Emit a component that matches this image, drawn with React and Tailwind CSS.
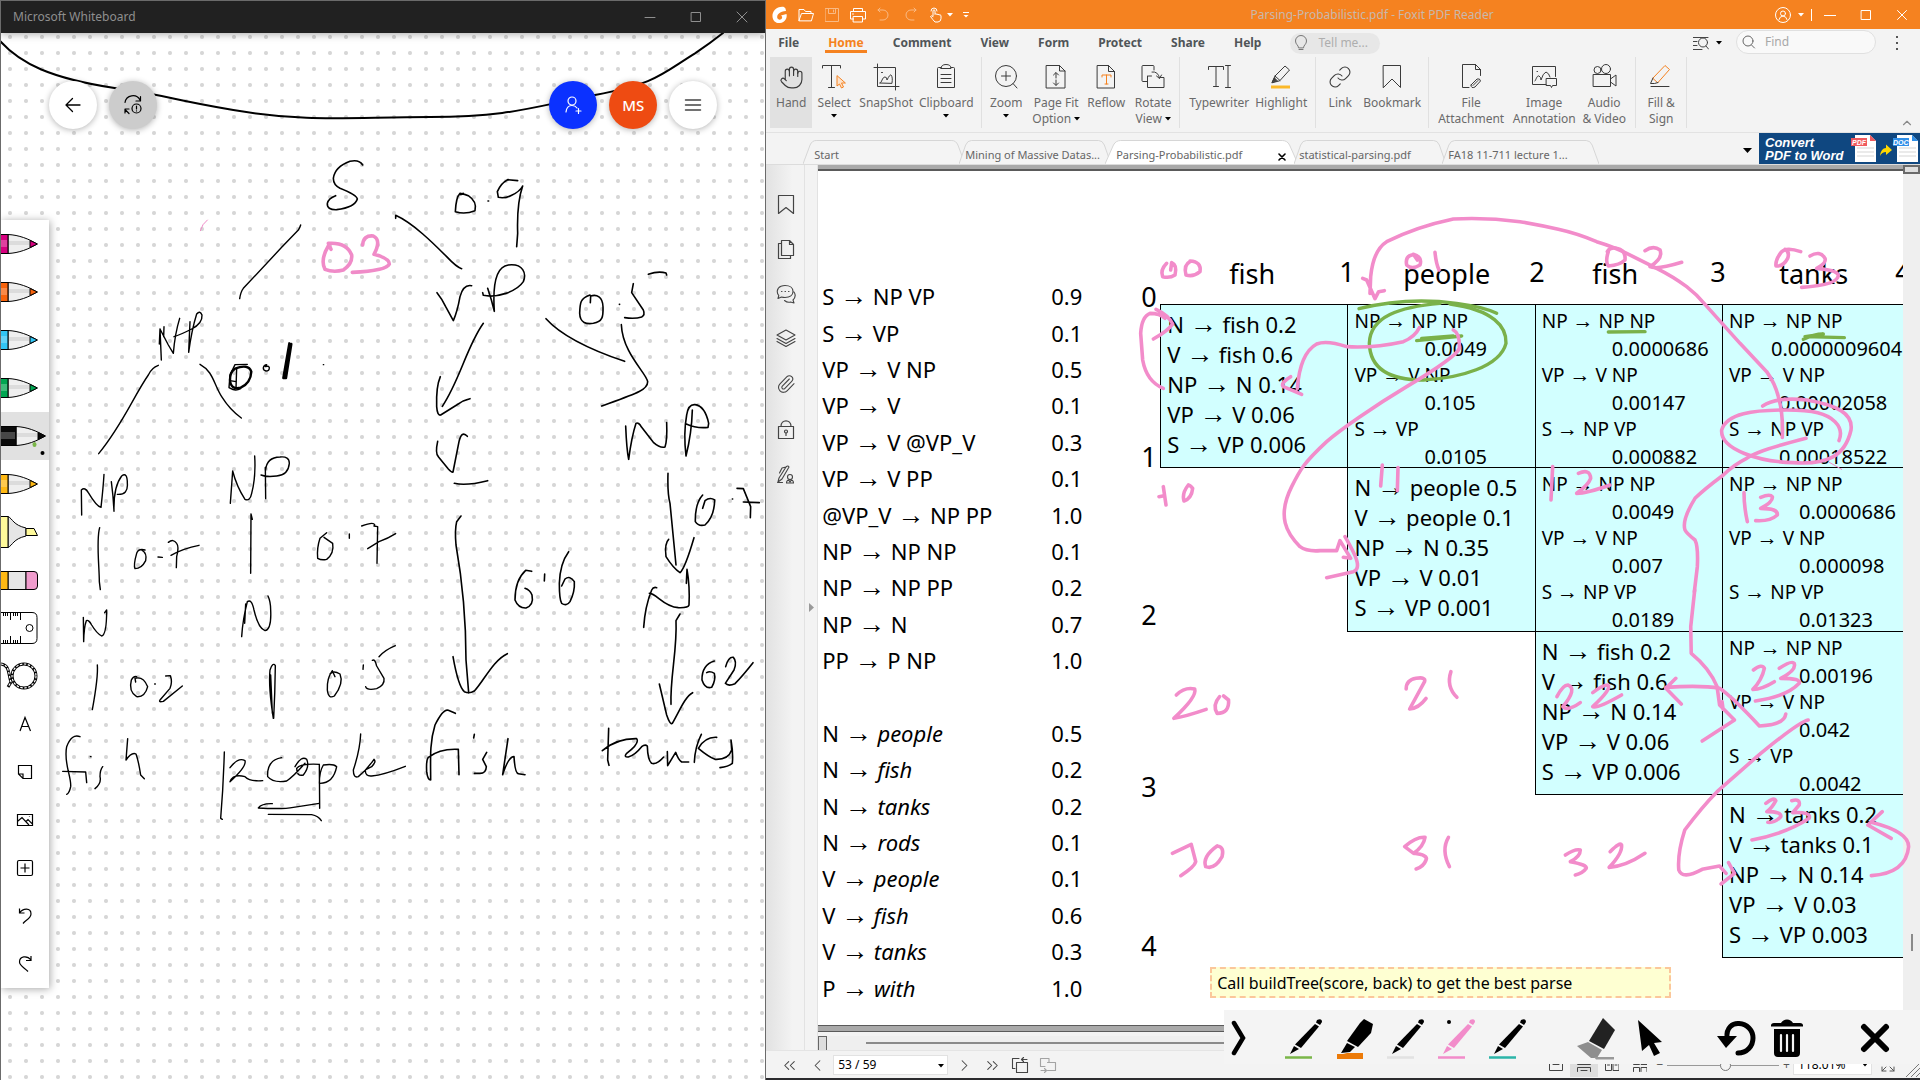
import React from "react";
import { Hand, Paperclip, Link, ChevronsLeft, ChevronLeft, ChevronRight, ChevronsRight, ChevronUp } from "lucide-react";

const UI = "font-['Noto_Sans',sans-serif]";

/* ---------- small helpers ---------- */

function Icon({ size = 24, box = 24, sw = 1, className = "", children }) {
  return (
    <svg width={size} height={size} viewBox={`0 0 ${box} ${box}`} fill="none" stroke="currentColor" strokeWidth={sw} strokeLinecap="round" strokeLinejoin="round" className={`shrink-0 ${className}`} aria-hidden="true">
      {children}
    </svg>
  );
}

function Caret({ className = "" }) {
  return (
    <svg width="6" height="4" viewBox="0 0 6 4" className={`inline-block shrink-0 ${className}`} aria-hidden="true">
      <path d="M0 0h6L3 3.5z" fill="currentColor" />
    </svg>
  );
}

function Ink({ x, y, sx = 1 / 3, color = "#000", w = 2, d }) {
  return (
    <g transform={`translate(${x} ${y}) scale(${sx} ${1 / 3})`} fill="none" stroke={color} strokeLinecap="round" strokeLinejoin="round">
      {d.map((p, i) => (
        <path key={i} d={p} strokeWidth={w} vectorEffect="non-scaling-stroke" />
      ))}
    </g>
  );
}

/* ---------- whiteboard ---------- */

const BOARD_CURVE = [
  "M0 123C60 190 150 235 348 265S480 292 700 330S1050 351 1290 351S1600 320 1785 285S1980 225 2085 160Q2130 130 2169 99",
];

const BOARD_A = [
  "M240 160Q228 172 226 215Q255 224 285 212Q292 185 265 167Q255 162 240 160M250 160l-8 4",
  "M324 183l2 0",
  "M413 122L383 119Q362 130 352 155L355 172Q375 176 395 166Q420 154 428 138Q410 190 413 280L410 320",
  "M47 235L47 226C100 250 160 310 200 350Q230 382 245 386",
  "M171 458Q185 475 197 500L220 542Q232 515 240 470Q250 432 275 437",
  "M323 445Q335 480 343 514C338 440 345 380 385 375C430 370 440 400 430 425C410 455 350 475 310 466L308 458",
  "M630 465C600 475 600 490 599 520C600 550 620 553 640 550C668 545 670 530 669 500C668 470 650 462 632 468L631 488",
  "M718 493l1 0",
  "M760 431L755 458L790 510Q796 525 785 531Q765 537 734 533M805 403Q835 392 858 399L860 405",
  "M498 536Q560 605 734 664",
  "M724 554C728 640 800 700 803 725C803 750 770 760 665 798",
  "M310 550C260 620 240 720 187 799",
  "M181 710Q168 740 170 800Q172 828 182 825L230 795Q250 780 270 776",
  "M173 904Q165 940 175 950L205 987Q215 998 219 996L237 905Q245 870 262 889",
  "M223 1030Q260 1038 323 1022",
  "M737 858Q740 930 746 958Q755 890 768 850Q775 845 785 862L820 907Q840 925 855 921Q862 900 860 848",
  "M937 810Q935 880 918 948Q910 880 920 825Q925 792 945 794Q975 798 986 850L984 862Q950 866 917 851",
  "M864 1000Q862 1060 870 1090L888 1275",
  "M968 1065Q945 1090 946 1145Q955 1160 975 1155Q1003 1130 1004 1080Q990 1070 975 1082L968 1105",
  "M1057 1077l1 0M1071 1045L1090 1046L1112 1100L1111 1133M1090 1086L1138 1088",
];

const BOARD_B = [
  "M243 48L230 65Q224 90 228 135C250 260 258 380 258 480L266 578",
  "M219 470Q235 560 253 575Q268 582 283 573C310 545 340 480 382 461",
  "M455 214L437 211Q405 240 405 300Q415 325 438 324Q462 315 456 285Q450 270 435 265M494 222L493 243",
  "M566 155Q540 190 538 250Q538 300 545 310Q560 320 570 305Q585 275 583 245Q570 225 555 237L545 258",
  "M866 118Q853 130 858 170Q880 205 900 218Q915 205 942 113",
  "M791 382Q795 320 815 270Q820 260 830 263M808 280C830 280 850 320 895 323Q925 324 927 315Q930 260 921 208L919 250",
  "M900 342L888 362C892 450 870 530 873 613M838 552L860 645Q870 675 877 670C900 630 915 590 938 578",
  "M1003 483Q965 495 966 540Q975 568 995 562Q1008 540 1003 520Q990 512 980 518",
  "M1037 500Q1045 470 1060 472Q1072 485 1062 510L1036 550Q1045 560 1065 551Q1090 525 1119 488",
  "M226 640L205 631Q190 625 165 675C148 730 152 780 152 840Q143 840 140 815Q138 780 145 772Q180 745 235 748L237 824",
  "M283 703L281 714M320 757L308 778L319 800Q318 820 300 820L283 820M384 716L368 824Q385 770 402 770Q405 820 415 821L435 824",
  "M686 685L683 780L687 796M667 752Q710 715 770 716Q780 730 740 760Q730 772 745 771Q765 765 785 740Q795 732 802 738Q803 780 815 790Q830 795 851 771",
  "M862 755L863 797L887 757Q895 780 905 786L926 786M964 703Q945 740 943 787M1010 712Q975 710 955 745Q985 770 1005 778Q1045 780 1055 750L1053 720Q1060 760 1057 790Q1045 800 1020 803",
];

const BOARD_C = [
  "M902 15Q900 22 895 30L845 82L730 205Q722 215 719 236",
  "M480 327L478 372M480 327L484 420M492 320L491 350M480 327L505 375L520 400Q525 340 539 295",
  "M570 305L566 397Q575 330 590 282Q600 270 606 285Q608 310 575 327Q540 345 522 350",
  "M475 436Q455 443 445 465C400 530 370 610 296 701",
  "M600 433C640 455 640 490 665 530Q690 570 724 594",
  "M742 433L705 434L690 465L687 503Q705 515 722 506M710 445L708 505M690 482L708 485",
  "M808 443Q808 453 798 453Q789 451 790 443Q792 434 800 434L796 440Q806 436 808 443",
  "M970 434l1 0",
  "M245 885L244 810Q255 800 265 818Q290 860 303 862Q310 800 312 763M334 785Q340 830 342 874Q340 800 365 768Q382 755 382 790Q385 825 352 823",
  "M691 850L698 753Q710 800 735 838Q750 845 755 820Q768 770 764 708M796 742L797 836M797 750Q800 712 840 711Q868 708 868 730Q865 765 830 768Q800 772 783 765",
  "M299 923C288 960 298 1040 298 1085L301 1109",
  "M435 990Q415 985 410 1000Q400 1035 405 1046Q425 1046 437 1022Q442 1000 425 990M474 1011L487 1012",
  "M505 967Q520 955 530 970Q538 980 530 1010L529 1043M513 1006Q550 985 597 976",
  "M757 898L753 882L752 1060",
  "M980 938L960 955Q950 985 953 1015Q965 1022 980 1018Q1003 1000 998 970L972 952M1048 942L1048 955",
  "M1085 918Q1120 905 1124 914L1122 918L1133 920L1131 1030M1103 986L1137 965Q1165 955 1187 941",
];

const BOARD_C_BOLD = [
  "M705 446Q745 430 754 455Q752 490 722 503Q692 510 690 480Q690 455 705 446",
  "M874 372L858 474M868 370L850 474M871 372L854 474",
];

const BOARD_D = [
  "M250 52L251 125Q252 80 259 62Q266 58 275 75Q290 100 305 108Q320 105 320 30L314 38",
  "M725 110Q728 60 742 5Q755 -5 762 30Q775 85 795 92Q815 88 812 30Q812 5 804 -12M737 12L734 70",
  "M292 195Q295 230 277 329",
  "M407 246L405 235Q430 228 443 260Q435 292 410 290Q385 275 394 240Q400 228 410 230M464 252l2 0",
  "M497 228L511 227Q518 245 510 265L480 300Q475 308 490 304L547 258",
  "M820 355Q805 260 810 210Q818 185 826 197Q825 280 821 355M812 225L817 340",
  "M990 222Q1000 210 1020 222Q1032 250 1003 288Q985 298 982 270Q980 235 997 212L1005 230",
  "M1090 195L1089 208M1117 181Q1125 175 1130 198L1152 235Q1155 255 1130 266Q1100 272 1097 260M1137 170Q1155 150 1186 137",
  "M240 410Q215 400 200 440C190 490 215 530 212 560Q208 580 200 583M188 514L257 516L260 548M271 470l2 0",
  "M308 500Q300 510 300 530Q305 550 285 566M383 416L378 480Q395 455 408 462Q415 480 422 525L433 536",
  "M673 456Q670 560 662 655L667 658M690 503Q715 470 735 482Q740 500 690 545Q700 520 735 530Q750 545 788 542",
  "M845 473Q800 480 803 530Q820 550 860 543Q880 530 915 490M885 500Q905 465 920 478Q930 500 910 525Q890 530 890 505Q900 490 958 493",
  "M958 493L959 625M960 550Q1000 550 1010 500Q1000 490 970 495Q958 515 958 550",
  "M1082 402Q1080 450 1060 510Q1060 535 1075 530Q1100 510 1122 478Q1130 485 1115 500L1096 510Q1095 530 1115 528Q1150 525 1216 499",
  "M817 611Q785 610 775 624Q850 628 880 622L958 610M805 643L935 644Q955 648 964 662",
];

const BOARD_PINK = [
  "M985 78Q960 120 975 148Q1000 158 1030 150Q1058 130 1055 105Q1040 66 985 70L993 88",
  "M1088 75Q1090 45 1120 48Q1145 60 1122 103Q1168 115 1168 132Q1160 152 1057 157",
];

function RoundButton({ label, className, children }) {
  return (
    <button type="button" aria-label={label} className={`flex size-12 items-center justify-center rounded-full shadow-[0_1px_6px_rgba(0,0,0,0.3)] ${className}`}>
      {children}
    </button>
  );
}

function PenTool({ color, tip, selected, label }) {
  return (
    <button type="button" aria-label={label} className={`flex h-12 w-full items-center ${selected ? "bg-[#e1e1e1]" : ""}`}>
      <svg width="48" height="48" viewBox="0 0 48 48" aria-hidden="true">
        <g transform={selected ? "translate(8 0)" : undefined}>
          <path d="M7 14.500C18 15 28 19 36 24C28 29 18 33 7 33.500z" fill="#efefef" stroke="#000" />
          <path d="M8 21h20v4H8z" fill="#dcdcdc" />
          <path d="M-9 14.500H7v19H-9z" fill={color} stroke="#000" />
          <path d="M-9 20H6v7H-9z" fill="#fff" opacity="0.25" />
          <path d="M29 20.500L36.500 24L29 27.500z" fill={tip || color} stroke="#000" />
        </g>
        {selected && <circle cx="41.500" cy="41" r="2" fill="#000" />}
        {selected && <ellipse cx="33.500" cy="32.500" rx="2" ry="2.500" fill="#7ab648" />}
      </svg>
    </button>
  );
}

function ToolSlot({ label, children }) {
  return (
    <button type="button" aria-label={label} className="flex h-12 w-full items-center text-black">
      <svg width="48" height="48" viewBox="0 0 48 48" fill="none" stroke="currentColor" aria-hidden="true">
        {children}
      </svg>
    </button>
  );
}

function Whiteboard() {
  return (
    <section className="relative flex min-w-0 flex-[765_1_0%] flex-col overflow-hidden border-x border-t border-[#6b6b6b] bg-white">
      <header className="relative z-10 flex h-8 shrink-0 items-center bg-[#212121] pl-3 text-[12px] text-[#8f8f8f] shadow-[0_1px_8px_rgba(0,0,0,0.35)]">
        <h1 className={`flex-1 ${UI}`}>Microsoft Whiteboard</h1>
        <button type="button" aria-label="Minimize" className="flex h-8 w-[46px] items-center justify-center"><Icon size={12} box={12}><path d="M1 6.500h10" /></Icon></button>
        <button type="button" aria-label="Maximize" className="flex h-8 w-[46px] items-center justify-center"><Icon size={12} box={12}><path d="M1.500 1.500h9v9h-9z" /></Icon></button>
        <button type="button" aria-label="Close" className="flex h-8 w-[46px] items-center justify-center"><Icon size={12} box={12}><path d="M1 1l10 10M11 1L1 11" /></Icon></button>
      </header>
      <div className="flex-1 bg-[radial-gradient(circle_at_center,#d6d6d6_1.5px,transparent_2.5px)] bg-[length:16px_16px] bg-[position:1px_12px]">
        <nav className="relative z-10 flex gap-3 pt-12 pr-12 pl-12">
          <RoundButton label="Back" className="bg-white text-black"><Icon size={20} box={20} sw={1.3}><path d="M17 10H4M9.500 3.500L3 10L9.500 16.500" /></Icon></RoundButton>
          <RoundButton label="Sync status" className="bg-[#cccccc] text-black">
            <Icon size={20} box={20} sw={1.2}><path d="M2 7.500A8 8 0 0 1 17 5M17.500 1.500v4.500h-4.500M6 18.500L2 14.500M2 18v-4h4" /><circle cx="13.500" cy="13.500" r="4.500" /><path d="M13.500 11v3M13.500 15.800v.2" /></Icon>
          </RoundButton>
          <div className="flex-1" />
          <RoundButton label="Invite" className="bg-[#0b31ff] text-white"><Icon size={20} box={20} sw={1.2}><circle cx="9" cy="6" r="4" /><path d="M3 17C3.500 12.500 6 10.500 9 10.500S13 11.500 14 13M15.500 13.500v5M13 16h5" /></Icon></RoundButton>
          <RoundButton label="Account" className={`bg-[#ee4b12] text-[15px] font-medium text-white ${UI}`}>MS</RoundButton>
          <RoundButton label="Menu" className="bg-white text-[#444]"><Icon size={18} box={18} sw={1.5}><path d="M1.500 4h15M1.500 9h15M1.500 14h15" /></Icon></RoundButton>
        </nav>
      </div>
      <svg className="pointer-events-none absolute top-[-1px] left-[-1px]" width="766" height="1080" viewBox="0 0 766 1080" aria-hidden="true">
        <Ink x={0} y={0} d={BOARD_CURVE} />
        <Ink x={0} y={0} w={1.6} d={["M1088 495Q1078 478 1050 484Q1005 500 1000 535Q1000 555 1020 565Q1070 585 1072 597Q1065 622 1010 629Q980 630 982 610Q985 595 1007 587"]} />
        <Ink x={380} y={140} w={1.6} d={BOARD_A} />
        <Ink x={380} y={500} w={1.6} d={BOARD_B} />
        <Ink x={0} y={220} w={1.4} d={BOARD_C} />
        <Ink x={0} y={220} w={2.4} d={BOARD_C_BOLD} />
        <Ink x={0} y={600} w={1.4} d={BOARD_D} />
        <Ink x={0} y={220} w={3.6} color="#f08bc8" d={BOARD_PINK} />
        <Ink x={0} y={220} w={1} color="#f08bc8" d={["M622 0Q606 12 601 32"]} />
      </svg>
      <aside className="absolute top-[219px] left-0 z-10 w-12 bg-white shadow-[1px_1px_8px_rgba(0,0,0,0.35)]">
        <PenTool label="Magenta pen" color="#d6007f" />
        <PenTool label="Orange pen" color="#f7630c" />
        <PenTool label="Blue pen" color="#31c5f4" />
        <PenTool label="Green pen" color="#00a651" />
        <PenTool label="Black pen" color="#0a0a0a" selected />
        <PenTool label="Yellow pen" color="#ffb914" />
        <ToolSlot label="Highlighter">
          <path d="M7 8.500C12 11 12 17 25 20V28C12 31 12 37 7 39.500z" fill="#e6e6e6" />
          <path d="M-2 8.500H7v31H-2zM25 20.500h8l3.500 7H25z" fill="#fffa9b" />
        </ToolSlot>
        <ToolSlot label="Eraser">
          <path d="M7 15.500h18v18H7z" fill="#e6e6e6" />
          <path d="M-2 15.500H7v18H-2z" fill="#ffb914" />
          <path d="M25 15.500h8q3.500 0 3.500 3.500v11q0 3.500-3.500 3.500h-8z" fill="#f09ccd" />
        </ToolSlot>
        <ToolSlot label="Ruler">
          <path d="M-2 8.500H31q5 0 5 5v21q0 5-5 5H-2" />
          <circle cx="28.500" cy="24" r="3.500" />
          <path d="M2.500 9v3M4.500 9v3M6.500 9v3M9.500 9v7M12.500 9v3M14.500 9v3M16.500 9v3M19.500 9v7M2.500 39v-3M4.500 39v-3M6.500 39v-3M9.500 39v-7M12.500 39v-3M14.500 39v-3M16.500 39v-3M19.500 39v-7" />
        </ToolSlot>
        <ToolSlot label="Lasso select">
          <g strokeWidth="3">
            <circle cx="23" cy="24" r="12" />
            <path d="M0 12C9 13 7 22 10 30L7 35" />
          </g>
          <g strokeWidth="1.200" stroke="#fff" strokeDasharray="2.500 1.500">
            <circle cx="23" cy="24" r="12" />
            <path d="M0 12C9 13 7 22 10 30L7 35" />
          </g>
        </ToolSlot>
        <ToolSlot label="Text"><path d="M19 31L24 17.500L29.500 31M21 26.500h7" strokeWidth="1.200" /></ToolSlot>
        <ToolSlot label="Note"><path d="M17.500 17.500h13v13H22l-4.500-4.500zM22 30.500v-4.500h-4.500" strokeWidth="1.200" /></ToolSlot>
        <ToolSlot label="Image"><path d="M16.500 18.500h15v11h-15zM17 25l4-3.500L28 29M25 25.500l2-1.800l4.500 4.500M28.500 20.500v.5" strokeWidth="1.200" /></ToolSlot>
        <ToolSlot label="Insert"><path d="M18 16.500h12q1.500 0 1.500 1.500v12q0 1.500-1.500 1.500H18q-1.500 0-1.500-1.500V18q0-1.500 1.500-1.500zM24 19.500v9M19.500 24h9" strokeWidth="1.200" /></ToolSlot>
        <ToolSlot label="Undo"><path d="M18.500 16.500v4.500h5M18.500 21C22 16 30 15.500 30 22C30 26 25 28 22 31.500" strokeWidth="1.200" /></ToolSlot>
        <ToolSlot label="Redo"><path d="M30 16v4.500h-5M30 20C26 15 18.500 16 18.500 22C18.500 26 24 28 27 31.500" strokeWidth="1.200" /></ToolSlot>
      </aside>
    </section>
  );
}

/* ---------- reader: title bar, menu, ribbon ---------- */

function TitleBar() {
  return (
    <header className="relative flex h-[29px] shrink-0 items-center bg-[#f58220] pl-[5px] text-white">
      <svg width="18" height="18" viewBox="0 0 18 18" className="shrink-0" aria-hidden="true">
        <path d="M13 1C6 0 1 5 1.500 11C2 15 5 17.500 9 17C14 16.500 16.500 12 15.500 8L10 9.500Q12 11 10.500 13Q8 14.500 6.500 12.500C5 9 9 5 15 5Q15 2 13 1z" fill="#fff" />
      </svg>
      <div className="ml-[9px] flex items-center gap-[10px]">
        <button type="button" aria-label="Open"><Icon size={16} box={16}><path d="M1 13.500V2.500h5l1.500 2H13v2M1 13.500L3.500 6.500H15.500L13.500 13.500z" /></Icon></button>
        <button type="button" aria-label="Save" className="opacity-45"><Icon size={16} box={16}><path d="M1.500 1.500h13v13h-13zM4.500 1.500v5h7v-5M9.500 3v2" /></Icon></button>
        <button type="button" aria-label="Print"><Icon size={16} box={16}><path d="M3.500 4.500v-3h9v3M3.500 12H.5V4.500h15V12h-3M3.500 9.500h9v5.500h-9zM2.500 7h1" /></Icon></button>
        <button type="button" aria-label="Undo" className="opacity-45"><Icon size={16} box={16}><path d="M4 1L2 3l2 2M2 3h5a5 5 0 0 1 0 10H4" /></Icon></button>
        <button type="button" aria-label="Redo" className="opacity-45"><Icon size={16} box={16}><path d="M12 1l2 2l-2 2M14 3H9a5 5 0 0 0 0 10h3" /></Icon></button>
        <button type="button" aria-label="Touch mode" className="flex items-center gap-[3px]"><Icon size={16} box={16}><path d="M5 9V3.500q1-1.500 2 0V7M7 7q1-1 2 .5q1-1 2 .5q1-.8 2 .5v3q0 3-3 3.500H7Q5 13 2.500 9.500q1-1.500 2.500 0M3 4a3 3 0 0 1 6 0" /></Icon><Caret /></button>
        <button type="button" aria-label="Customize toolbar"><Icon size={6} box={6}><path d="M0 .5h6" /><path d="M.5 3h5L3 5.500z" fill="#fff" stroke="none" /></Icon></button>
      </div>
      <h1 className={`flex-1 text-center text-[12px] text-[#c9b8ab] ${UI}`}>Parsing-Probabilistic.pdf - Foxit PDF Reader</h1>
      <button type="button" aria-label="Account" className="flex items-center gap-[7px]"><Icon size={16} box={16}><circle cx="8" cy="8" r="7.500" /><circle cx="8" cy="6.500" r="2.500" /><path d="M4 12.500q.5-3 4-3.500q3.500.5 4 3.500" /></Icon><Caret /></button>
      <span className="ml-[7px] h-3 w-px bg-white" />
      <button type="button" aria-label="Minimize" className="flex h-full w-9 items-center justify-center"><Icon size={12} box={12}><path d="M0 6.500h12" /></Icon></button>
      <button type="button" aria-label="Maximize" className="flex h-full w-9 items-center justify-center"><Icon size={12} box={12}><path d="M1.500 1.500h9v9h-9z" /></Icon></button>
      <button type="button" aria-label="Close" className="flex h-full w-9 items-center justify-center"><Icon size={12} box={12}><path d="M1.500 1.500l9 9M10.500 1.500l-9 9" /></Icon></button>
    </header>
  );
}

const MENUS = ["File", "Home", "Comment", "View", "Form", "Protect", "Share", "Help"];

function MenuBar() {
  return (
    <div className={`flex h-7 shrink-0 items-center pl-[9px] text-[12px] ${UI}`}>
      <nav className="flex gap-[23px] self-stretch">
        {MENUS.map((m) => (
          <button key={m} type="button" className={`mb-1 border-b-[3px] px-[3px] pt-[6px] leading-4 font-bold ${m === "Home" ? "border-[#f58220] text-[#f58220]" : "border-transparent text-[#505558]"}`}>
            {m}
          </button>
        ))}
      </nav>
      <label className="ml-[26px] flex h-[21px] w-[90px] items-center gap-[9px] rounded-full bg-[#e7e7e7] pl-[3px] text-[#777]">
        <Icon size={16} box={16}><path d="M5.500 12.500C5.500 10 2.500 9.500 2.500 6a5.500 5.500 0 0 1 11 0C13.500 9.500 10.500 10 10.500 12.500zM6 14.500h4" /></Icon>
        <input aria-label="Tell me" placeholder="Tell me..." className="w-14 bg-transparent text-[12px] placeholder:text-[#aeaeae]" />
      </label>
      <div className="flex-1" />
      <button type="button" aria-label="Search options" className="flex items-center gap-[7px] text-[#444]"><Icon size={16} box={16}><path d="M0 2.500h15M0 6.500h4M0 10.500h4M0 14.500h9" /><circle cx="10" cy="7.500" r="4.500" /><path d="M13 11l2.500 3" /></Icon><Caret className="text-black" /></button>
      <label className="mb-[2px] ml-[14px] flex h-[24px] w-[140px] items-center gap-[9px] rounded-full border border-[#e0e0e0] bg-[#f9f9f9] pl-[5px] text-[#666]">
        <Icon size={14} box={14}><circle cx="6" cy="6" r="5" /><path d="M9.500 10l3 3" /></Icon>
        <input aria-label="Find" placeholder="Find" className="w-20 bg-transparent text-[12px] placeholder:text-[#a8a8a8]" />
      </label>
      <button type="button" aria-label="More" className="mr-[22px] ml-5 flex flex-col gap-1"><i className="size-[2px] bg-[#555]" /><i className="size-[2px] bg-[#555]" /><i className="size-[2px] bg-[#555]" /></button>
    </div>
  );
}

const ICONS = {
  hand: <Hand size={25} strokeWidth={1.1} />,
  select: <Icon size={28} box={28}><path d="M2.500 5V2.500h18V5M11.500 2.500v22M8.500 24.500h6" /><path d="M17 13v10l2.500-2l2 4l2-1l-2-4h3.500z" fill="#fde3cb" stroke="#f58220" /></Icon>,
  snap: <Icon size={28} box={28}><path d="M5.500 1v22.500H27M2 4.500h21.500V27M8 20c2 0 2-6 5-6q2 0 2 3q3-6 4-5q2 2 1 8zM9.500 9.500h1" /></Icon>,
  clip: <Icon size={28} box={28}><path d="M9 4.500H6.500q-1 0-1 1v19h17v-19q0-1-1-1H19M9 5.500h10q0-4-5-4t-5 4M9 11.500h10M9 15.500h10M9 19.500h10" /></Icon>,
  zoom: <Icon size={28} box={28}><circle cx="14" cy="13" r="10.500" /><path d="M14 8.500v9M9.500 13h9M21 20.500l4 4.500" /></Icon>,
  fit: <Icon size={28} box={28}><path d="M4.500 2.500h13l5.500 5.500v17h-18.500zM17.500 2.500v5.500h5.500M14 10v5M11.500 12L14 9.500l2.500 2.500M14 17v5M11.500 20l2.500 2.500l2.500-2.500" /></Icon>,
  reflow: <Icon size={28} box={28}><path d="M5.500 2.500h11l6 6v16.500h-17zM16.500 2.500v6h6" /><path d="M10 14v-2h9v2M14.500 12v9M13 21h3" stroke="#f58220" /></Icon>,
  rotate: <Icon size={28} box={28}><path d="M8 18.500H4q-1 0-1-1V3.500q0-1 1-1h10q1 0 1 1V7M8.500 14q0-1 1-1h3M8.500 13v11.500h16.500V14.500h-4M13 9q6-1 7.500 6M17.500 13l3 2.500l2-3.500" /></Icon>,
  type: <Icon size={28} box={28}><path d="M3.500 6.500V3.500h15v3M11 3.500v20M8.500 23.500h5M20.500 2.500h5M20.500 24.500h5M23 2.500v22" /></Icon>,
  highlight: <Icon size={28} box={28}><path d="M5 19.500l3-6.500L18 3l4.500 4L13 17.500zM8 13l5 4.500M8 14l-2 4" /><path d="M5.500 19l2-4l2.500 2.500z" fill="#444" /><path d="M4 24h19" stroke="#fbb829" strokeWidth="3" strokeLinecap="butt" /></Icon>,
  link: <Link size={24} strokeWidth={1.1} />,
  bookmark: <Icon size={28} box={28}><path d="M5.500 2.500h17v22L14 16l-8.500 8.500z" /></Icon>,
  file: <Icon size={28} box={28}><path d="M12 24.500H5.500v-23h13l5 5v6M18.500 1.500v5h5M14 22l6-6q3-1 3.500 2l-5.500 6q-4 2-4-2M16 22.500l5-5" /></Icon>,
  image: <Icon size={28} box={28}><path d="M16 21.500H2.500v-18h23v10M5 18c1-1 2-6 4-5q2 1 2 4q2-7 5-8q3 1 4 5M7 8.500h.5M16.500 15.500h10v7h-4l-1 2l-1-2h-4z" /></Icon>,
  audio: <Icon size={28} box={28}><path d="M3.500 11.500h17v12h-17zM20.500 16l5.500-4v11l-5.500-4" /><circle cx="7.500" cy="7" r="3.500" /><circle cx="16" cy="6" r="4.500" /></Icon>,
  sign: <Icon size={28} box={28}><path d="M6 15L18 2.500l4.500 4L11 19.500z" stroke="#f58220" /><path d="M6 15l-2.500 5.500h4L11 19.500M4 23.500h18" /></Icon>,
};

const RIBBON = [
  [["hand", "Hand", "", "w-[42px]", "bg-[#e1e1e1]"], ["select", "Select", "", "w-11", "", true], ["snap", "SnapShot", "", "w-[60px]", ""], ["clip", "Clipboard", "", "w-[60px]", "", true]],
  [["zoom", "Zoom", "", "w-[48px]", "", true], ["fit", "Page Fit", "Option", "w-[52px]", "", true], ["reflow", "Reflow", "", "w-[48px]", ""], ["rotate", "Rotate", "View", "w-[46px]", "", true]],
  [["type", "Typewriter", "", "w-16", ""], ["highlight", "Highlight", "", "w-[60px]", ""]],
  [["link", "Link", "", "w-10", ""], ["bookmark", "Bookmark", "", "w-16", ""]],
  [["file", "File", "Attachment", "w-[74px]", ""], ["image", "Image", "Annotation", "w-[72px]", ""], ["audio", "Audio", "& Video", "w-12", ""]],
  [["sign", "Fill &", "Sign", "w-10", ""]],
];

const GROUP_PAD = ["pl-[4px] pr-[5px]", "pr-[3px]", "pl-[7px] pr-[4px]", "px-[4px]", "pl-[5px] pr-[7px]", "px-[5px]"];

function Ribbon() {
  return (
    <div className={`relative flex h-[76px] shrink-0 border-b border-[#e2e2e2] pb-1 text-[12px] leading-4 text-[#6a6a6a] ${UI}`}>
      {RIBBON.map((group, i) => (
        <div key={i} className={`flex border-r border-[#e0e0e0] ${GROUP_PAD[i]}`}>
          {group.map(([icon, a, b, w, bg, caret]) => (
            <button key={a} type="button" className={`flex flex-col items-center whitespace-nowrap pt-[6px] ${w} ${bg}`}>
              <span className="mb-[4px] flex h-[28px] items-center text-[#3a3a3a]">{ICONS[icon]}</span>
              <span>{a}</span>
              {b ? (
                <span className="flex items-center gap-[3px]">{b}{caret && <Caret className="text-black" />}</span>
              ) : (
                caret && <Caret className="mt-[3px] text-black" />
              )}
            </button>
          ))}
        </div>
      ))}
      <button type="button" aria-label="Collapse ribbon" className="mr-[6px] mb-[-2px] ml-auto self-end text-[#8a8a8a]"><ChevronUp size={14} strokeWidth={2} /></button>
    </div>
  );
}

const TABS = [
  ["Start", "w-[162px]", "pl-[11px]"],
  ["Mining of Massive Datas...", "w-[152px] -ml-[6px]", "pl-[6px]"],
  ["Parsing-Probabilistic.pdf", "w-[193px] -ml-[6px]", "pl-[11px]", true],
  ["statistical-parsing.pdf", "w-[152px] -ml-[4px]", "pl-[5px]"],
  ["FA18 11-711 lecture 1...", "w-[157px] -ml-[4px]", "pl-[6px]"],
];

function TabBar() {
  return (
    <div className={`flex h-8 shrink-0 border-b border-[#dcdcdc] pl-[37px] text-[11px] text-[#666] ${UI}`}>
      {TABS.map(([t, w, pad, active]) => (
        <div key={t} className={`relative mt-[7px] h-6 shrink-0 ${w}`}>
          <svg viewBox="0 0 160 24" preserveAspectRatio="none" className="absolute inset-0 size-full" aria-hidden="true">
            <path d="M0 24L7 5Q9 .5 13 .5H147Q151 .5 153 5L160 24" fill={active ? "#fff" : "#f4f4f4"} stroke="#d6d6d6" vectorEffect="non-scaling-stroke" />
          </svg>
          <button type="button" className={`relative h-full w-full pt-[7px] text-left whitespace-nowrap ${pad}`}>{t}</button>
          {active && <button type="button" aria-label="Close tab" className="absolute top-[13px] right-[12px] text-black"><Icon size={8} box={8} sw={1.6}><path d="M1 1l6 6M7 1L1 7" /></Icon></button>}
        </div>
      ))}
      <button type="button" aria-label="All tabs" className="mt-1 ml-auto flex w-6 items-center justify-center text-black"><svg width="9" height="6" viewBox="0 0 9 6" aria-hidden="true"><path d="M0 0h9L4.500 5z" fill="currentColor" /></svg></button>
      <a href="#convert" className="flex w-[161px] items-center bg-[#0f4780] pl-[6px] font-['Liberation_Sans',sans-serif] text-[13px] leading-[13px] font-bold text-white italic">
        <span className="whitespace-nowrap">Convert<br />PDF to Word</span>
        <svg width="70" height="31" viewBox="0 0 70 31" className="ml-auto shrink-0" aria-hidden="true">
          <path d="M5 2h15l6 6v21H5zM47 2h15l6 6v21H47z" fill="#fff" />
          <path d="M20 2l6 6h-6z" fill="#ef5a5f" />
          <path d="M62 2l6 6h-6z" fill="#2f8fe8" />
          <path d="M7 15h17M7 19h17M7 23h17M49 15h17M49 19h17M49 23h17" stroke="#d5d5d5" />
          <path d="M1 5h16v8H1z" fill="#ef5a5f" />
          <path d="M43 5h16v8H43z" fill="#2f8fe8" />
          <path d="M30 23q1-8 6-8v-3.500l6 5.500l-6 5v-3q-4 0-6 4z" fill="#ffd800" />
          <g fill="#fff" fontFamily="Liberation Sans, sans-serif" fontSize="7" fontWeight="700"><text x="2" y="11.500">PDF</text><text x="43" y="11.500">DOC</text></g>
        </svg>
      </a>
    </div>
  );
}

/* ---------- document ---------- */

function Rule({ text, small }) {
  const [a, b] = text.split("→");
  return (
    <>
      {a}
      <span className={`font-['Liberation_Serif',serif] leading-none ${small ? "text-[21px]" : "text-[27px]"}`}>→</span>
      {b}
    </>
  );
}

const GRAMMAR = [
  ["S → NP VP", "0.9"], ["S → VP", "0.1"], ["VP → V NP", "0.5"], ["VP → V", "0.1"], ["VP → V @VP_V", "0.3"], ["VP → V PP", "0.1"],
  ["@VP_V → NP PP", "1.0"], ["NP → NP NP", "0.1"], ["NP → NP PP", "0.2"], ["NP → N", "0.7"], ["PP → P NP", "1.0"], null,
  ["N →", "0.5", "people"], ["N →", "0.2", "fish"], ["N →", "0.2", "tanks"], ["N →", "0.1", "rods"],
  ["V →", "0.1", "people"], ["V →", "0.6", "fish"], ["V →", "0.3", "tanks"], ["P →", "1.0", "with"],
];

const IND = "pl-[76px]";
const big = (...lines) => ({ lines });
const small = (vals, last = "S → NP VP", indents = [IND, IND, IND]) => ({ vals, last, indents });

const CHART = [
  [big("N → fish 0.2", "V → fish 0.6", "NP → N 0.14", "VP → V 0.06", "S → VP 0.006"), small(["0.0049", "0.105", "0.0105"], "S → VP"), small(["0.0000686", "0.00147", "0.000882"]), small(["0.0000009604", "0.00002058", "0.00018522"], "S → NP VP", ["pl-[48px]", "pl-[56px]", "pl-[56px]"])],
  [null, big("N → people 0.5", "V → people 0.1", "NP → N 0.35", "VP → V 0.01", "S → VP 0.001"), small(["0.0049", "0.007", "0.0189"]), small(["0.0000686", "0.000098", "0.01323"])],
  [null, null, big("N → fish 0.2", "V → fish 0.6", "NP → N 0.14", "VP → V 0.06", "S → VP 0.006"), small(["0.00196", "0.042", "0.0042"], "S → VP")],
  [null, null, null, big("N → tanks 0.2", "V → tanks 0.1", "NP → N 0.14", "VP → V 0.03", "S → VP 0.003")],
];

function Cell({ cell }) {
  if (!cell) return <td className="p-0" />;
  return (
    <td className="border border-black bg-[#d2ffff] p-0 align-top whitespace-nowrap">
      {cell.lines ? (
        <div className="h-[160px] pt-[4px] pl-[6px] text-[22px] leading-[30px]">
          {cell.lines.map((l) => <p key={l}><Rule text={l} /></p>)}
        </div>
      ) : (
        <div className="h-[160px] pt-[3px] pl-[6px] text-[19px] leading-[27px]">
          {["NP → NP NP", "VP → V NP", cell.last].map((l, i) => (
            <React.Fragment key={i}>
              <p><Rule text={l} small /></p>
              <p className={`-ml-[6px] text-[20px] ${cell.indents[i]}`}>{cell.vals[i]}</p>
            </React.Fragment>
          ))}
        </div>
      )}
    </td>
  );
}

const HEADS = ["fish", "1", "people", "2", "fish", "3", "tanks", "4"];

function Slide() {
  return (
    <main className="flex min-h-0 flex-1 overflow-hidden border-t-2 border-[#5a5a5a] bg-white font-['Noto_Sans',sans-serif] text-black">
      <table className="mt-[107px] ml-[4px] h-[728px] w-[268px] shrink-0 border-collapse text-[22px] leading-7">
        <tbody>
          {GRAMMAR.map((g, i) =>
            g ? (
              <tr key={i}>
                <td className="p-0 whitespace-nowrap"><Rule text={g[0]} />{g[2] && <i> {g[2]}</i>}</td>
                <td className="w-[39px] p-0">{g[1]}</td>
              </tr>
            ) : (
              <tr key={i}><td className="p-0" colSpan={2}>&nbsp;</td></tr>
            )
          )}
        </tbody>
      </table>
      <div className="mt-[108px] ml-[51px] w-[19px] shrink-0 text-[27px] leading-9">
        <p className="h-[160px]">0</p>
        <p className="h-[158px]">1</p>
        <p className="h-[172px]">2</p>
        <p className="h-[159px]">3</p>
        <p>4</p>
      </div>
      <div className="mt-[81px] w-[750px] shrink-0">
        <div className="grid h-[52px] grid-cols-[110px_64px_126px_63px_118px_69px_116px_20px] pl-[69px] text-[27px] leading-10">
          {HEADS.map((h, i) => <span key={i} className={i % 2 ? "" : "pt-[2px]"}>{h}</span>)}
        </div>
        <table className="h-[654px] w-full table-fixed border-collapse">
          <tbody>
            {CHART.map((row, r) => <tr key={r}>{row.map((c, i) => <Cell key={i} cell={c} />)}</tr>)}
          </tbody>
        </table>
        <p className="mt-[9px] ml-[50px] w-[461px] border-2 border-dashed border-[#fbc79b] bg-[#feffd2] px-[5px] pt-[2px] text-[16px] leading-[25px]">Call buildTree(score, back) to get the best parse</p>
      </div>
    </main>
  );
}

const P9 = [
  "M80 190Q60 210 68 230Q90 235 105 225Q112 195 95 188L92 210M150 185Q130 195 138 225Q160 232 180 215Q185 185 150 183",
  "M815 165Q795 170 800 195Q815 210 840 195Q848 170 820 163L832 180M885 157Q888 190 897 210",
  "M1927 712Q1930 640 1915 590Q1905 550 1880 515L1800 430L1695 313Q1670 283 1640 260Q1600 230 1550 205Q1500 180 1460 160Q1420 140 1370 125Q1310 100 1255 88Q1200 75 1140 65Q1040 52 940 57Q830 80 740 125Q700 150 692 230L690 280M668 235L680 240L705 296L716 275L733 272",
  "M70 565Q20 545 8 480L2 400Q5 350 30 340Q60 340 75 355M48 328Q85 345 98 372Q85 392 40 417",
  "M838 383Q825 410 790 425Q700 445 620 440Q560 420 530 432Q480 460 472 565M452 530Q420 550 430 560L485 583",
  "M940 390Q960 400 958 445Q950 470 800 560C700 620 600 690 560 725C490 790 480 810 455 860C410 950 440 1000 480 1040Q500 1055 540 1052L590 1052L600 1022L632 1075L610 1072M615 1010Q650 1070 652 1090Q655 1110 640 1115L560 1133",
  "M70 860L78 915M57 890L72 887M145 855Q125 880 132 903Q155 895 158 865Q150 855 145 855M727 795L722 858M774 803L772 872",
];

const G9 = [
  "M657 326Q800 290 950 310Q1030 320 1070 340",
  "M930 312C1060 330 1100 380 1098 430C1080 500 960 535 850 540C740 540 690 500 688 430C690 350 780 320 900 310",
  "M830 422L965 408M845 415L940 408",
];

const P10 = [
  "M265 155Q255 185 265 198Q300 195 315 180Q318 150 290 145Q270 140 262 155M375 152Q400 135 420 150Q430 175 390 200Q410 210 485 187",
  "M842 155Q800 140 785 155Q765 180 768 198Q790 200 803 175Q810 155 795 148M870 168Q900 150 915 175Q920 190 890 205Q950 210 955 225Q955 255 845 262",
  "M728 618Q770 590 860 600C950 615 1000 640 993 690C975 770 920 795 820 788C720 785 600 750 605 690C620 640 700 630 800 630C880 630 920 640 945 665Q970 690 957 722",
  "M858 715C760 740 700 760 680 775Q640 795 610 825Q550 870 525 895Q485 960 495 990Q500 1000 525 1020Q535 1040 532 1100L523 1175",
  "M98 800L93 900M175 820Q210 805 212 835Q205 855 170 880Q200 880 270 855",
  "M672 878Q672 920 682 965M722 892Q750 880 757 890Q760 905 722 925Q775 925 772 945Q750 965 707 962",
];

const G10 = ["M265 396L375 395", "M850 418Q880 402 910 402L855 410L973 413"];

const P11 = [
  "M73 315Q90 290 110 297Q115 320 68 385Q90 380 133 358M160 320Q145 345 155 370Q180 370 178 330L168 318",
  "M535 297Q535 270 555 265Q575 260 572 275L542 357Q560 355 575 325M625 245Q615 290 637 322",
  "M838 320Q850 285 860 285Q880 295 850 350Q860 365 885 338M910 308Q930 285 940 285Q950 295 910 350Q915 360 968 315",
  "M1233 240Q1250 220 1255 235Q1250 270 1232 298Q1250 298 1275 275M1285 235Q1310 210 1315 220Q1320 240 1288 265Q1330 265 1325 280Q1300 320 1237 333",
  "M1115 0L1107 110L1108 190Q1145 235 1160 290L1165 345L1195 390L1130 453M1170 335L1172 358",
  "M1077 265L1057 295L1088 342M1057 292Q1130 285 1165 295Q1190 320 1245 408Q1295 405 1298 372",
  "M1343 390Q1325 395 1240 500L1160 605Q1130 650 1095 720Q1080 790 1083 840Q1090 870 1130 838L1165 828L1178 850M1183 818L1195 850L1168 882",
  "M1258 640Q1275 620 1278 632Q1270 655 1260 665Q1290 665 1288 680Q1275 700 1262 697M1310 632Q1328 625 1325 645L1312 668Q1350 665 1345 685Q1300 730 1230 750",
  "M1470 857Q1540 850 1545 770Q1545 725 1470 697M1492 665L1463 705L1510 745",
  "M65 790L103 763L112 815Q110 830 82 857M155 768Q125 800 132 830Q150 840 165 800Q170 770 155 768",
  "M532 770Q555 740 573 742Q570 770 550 790Q580 795 575 810Q570 830 555 837M532 770L550 790M620 742Q605 780 622 830",
  "M855 795Q875 775 885 780Q885 800 865 815Q900 825 897 835Q890 850 875 855M945 785Q965 755 968 765Q970 790 943 832Q975 830 1015 790",
];

function SlideInk() {
  return (
    <svg className="pointer-events-none absolute top-0 left-0" width="1154" height="1080" viewBox="766 0 1154 1080" aria-hidden="true">
      <Ink x={1140} y={200} color="#7ab14a" w={3.4} d={G9} />
      <Ink x={1520} y={200} color="#7ab14a" w={3.4} d={G10} />
      <Ink x={1140} y={200} color="#f28cca" w={3.6} d={P9} />
      <Ink x={1520} y={200} color="#f28cca" w={3.6} d={P10} />
      <Ink x={1520} y={200} color="#f28cca" w={1} d={["M928 787L965 808"]} />
      <Ink x={1140} y={590} sx={0.4975} color="#f28cca" w={3.6} d={P11} />
    </svg>
  );
}

const SIDE_ICONS = [
  ["Bookmarks", <Icon size={20} box={20} key="b" sw={1.2}><path d="M2.500 1.500h15v18L10 13.500l-7.500 6z" /></Icon>],
  ["Pages", <Icon size={20} box={20} key="p" sw={1.2}><path d="M5.500 1.500h8l4 4v11h-12zM13.500 1.500v4h4M5 4.500H2.500v15h12v-2.500" /></Icon>],
  ["Comments", <Icon size={20} box={20} key="c" sw={1.1}><path d="M9 1.500c5 0 8 2.500 8 6s-3 6-8 6q-2 0-3.500-.5L2 14.500l.8-3C.5 9 .5 4 5 2.200Q7 1.500 9 1.500zM18 8c2 3 1 6-1 8l1 3l-3.500-1q-3 1-6-1.500M5.500 7.500h.5M9 7.500h.5M12.500 7.500h.5" /></Icon>],
  ["Layers", <Icon size={20} box={20} key="l" sw={1.1}><path d="M10 1l9 5l-9 5l-9-5zM1 9.500l9 5l9-5M1 12.500l9 5l9-5M1 6" /></Icon>],
  ["Attachments", <Paperclip size={20} strokeWidth={1.3} key="a" />],
  ["Security", <Icon size={20} box={20} key="s" sw={1.2}><path d="M2.500 7.500h15v12h-15zM5 7.500C5 0 15 0 15 7.500" /><circle cx="10" cy="12.500" r="1.500" /><path d="M10 14v2.500" /></Icon>],
  ["Signatures", <Icon size={20} box={20} key="g" sw={1.1}><path d="M2 18l1-4L10 3q2-2 3 0L6 15zM10 3L6 4L3.500 9M1.500 18.500h5" /><circle cx="14" cy="13" r="2.500" /><path d="M10.500 19q0-3 3.500-3.500q3.500.5 3.500 3.500zM12.500 16l1.500 2l1.500-2" /></Icon>],
];

function PenMark({ body = "#000", line, thick }) {
  return (
    <svg width="40" height="44" viewBox="0 0 40 44" aria-hidden="true">
      {thick ? (
        <>
          <path d="M29 3l9 5l-2 9L23 31l-11-6L25 7z" fill={body} />
          <path d="M12 27l8 4l-5 5L6 37z" fill={body} />
          <path d="M2 38h6l4-1h16v6H2z" fill={line} />
        </>
      ) : (
        <>
          <path d="M31 8l4 2.500L17 32l-6-3.500z" fill={body} />
          <path d="M33 4q5-2 5 2l-2 3l-4-2.500z" fill={body} />
          <path d="M10 30l5 3l-9 5z" fill={body} />
          <path d="M1 41.500h27" stroke={line} strokeWidth="2.500" />
        </>
      )}
    </svg>
  );
}

function InkToolbar() {
  return (
    <div className="absolute right-0 bottom-[14px] z-20 flex h-[54px] w-[696px] items-center bg-[#f4f4f4] pt-[2px] pl-[6px]">
      <button type="button" aria-label="Collapse"><svg width="17" height="36" viewBox="0 0 17 36" fill="none" aria-hidden="true"><path d="M4 3L13 18L4 33" stroke="#000" strokeWidth="4.500" strokeLinecap="round" /></svg></button>
      <div className="ml-[37px] flex gap-[11px]">
        <button type="button" aria-label="Green ink"><PenMark line="#7ab648" /></button>
        <button type="button" aria-label="Orange highlighter"><PenMark line="#ec7a08" thick /></button>
        <button type="button" aria-label="White ink"><PenMark line="#e2e2e2" /></button>
        <button type="button" aria-label="Pink ink" className="relative"><PenMark body="#f28cca" line="#f28cca" /><i className="absolute top-1 left-[10px] size-1 rounded-full bg-black" /></button>
        <button type="button" aria-label="Teal ink"><PenMark line="#2bb5a8" /></button>
      </div>
      <button type="button" aria-label="Eraser" className="ml-[48px]">
        <svg width="40" height="44" viewBox="0 0 40 44" aria-hidden="true"><path d="M27 2L39 14L28 33L13 25z" fill="#222" /><path d="M12 26L26 34L21 42L15 42L1 30z" fill="#8e8e8e" /><path d="M18 41h20v2.500H20z" fill="#999" /></svg>
      </button>
      <button type="button" aria-label="Select" className="ml-[21px]"><svg width="26" height="38" viewBox="0 0 26 38" aria-hidden="true"><path d="M1 1L25 23L17 24L23 34L17 37L12 26L5 32z" fill="#000" /></svg></button>
      <button type="button" aria-label="Undo" className="ml-[53px]"><svg width="42" height="38" viewBox="0 0 42 38" fill="none" aria-hidden="true"><path d="M11 19C10 8 17 4 23 4.500C31 5 37 11 37 19S31 34 22 34" stroke="#000" strokeWidth="5" strokeLinecap="round" /><path d="M1 17h20L10 29z" fill="#000" /></svg></button>
      <button type="button" aria-label="Delete all" className="ml-[13px]"><svg width="32" height="38" viewBox="0 0 32 38" aria-hidden="true"><path d="M0 6.500q0-2.500 3-2.500h7q2-3.500 6-3.500t6 3.500h7q3 0 3 2.500v1H0zM3 10h26v24q0 4-4 4H7q-4 0-4-4z" fill="#000" /><path d="M10 16v16M16 16v16M22 16v16" stroke="#f4f4f4" strokeWidth="2.200" strokeLinecap="round" /></svg></button>
      <button type="button" aria-label="Close" className="ml-auto mr-[30px]"><svg width="30" height="30" viewBox="0 0 30 30" aria-hidden="true"><path d="M4 4l22 22M26 4L4 26" stroke="#000" strokeWidth="6" strokeLinecap="round" /></svg></button>
    </div>
  );
}

function StatusBar() {
  const nav = "flex w-7 items-center justify-center text-[#444]";
  return (
    <footer className={`flex h-7 shrink-0 items-center border-t border-[#e4e4e4] bg-[#f3f3f3] pt-px pl-[9px] text-[12px] text-black ${UI}`}>
      <button type="button" aria-label="First page" className={nav}><ChevronsLeft size={19} strokeWidth={1.3} /></button>
      <button type="button" aria-label="Previous page" className={nav}><ChevronLeft size={19} strokeWidth={1.3} /></button>
      <label className="relative mx-[2px]">
        <select aria-label="Page" className="h-[20px] w-[115px] appearance-none border border-[#e2e2e2] bg-white pl-1"><option>53 / 59</option></select>
        <Caret className="pointer-events-none absolute top-[9px] right-[4px]" />
      </label>
      <button type="button" aria-label="Next page" className={nav}><ChevronRight size={19} strokeWidth={1.3} /></button>
      <button type="button" aria-label="Last page" className={nav}><ChevronsRight size={19} strokeWidth={1.3} /></button>
      <button type="button" aria-label="Previous view" className={nav}><Icon size={18} box={18} sw={1.1}><path d="M5.500 6.500h11v10h-11zM4 12.500H1.500v-10H8M11 3.500h5M12.500 1.500l-2 2l2 2" /></Icon></button>
      <button type="button" aria-label="Next view" className={`${nav} opacity-45`}><Icon size={18} box={18} sw={1.1}><path d="M10 6V2.500H1.500v8H6M8.500 6.500h8v8h-8M2 14.500h5M5.500 12.500l2 2l-2 2" /></Icon></button>
      <div className="flex-1" />
      <div className="flex items-center text-[#555]">
        <button type="button" aria-label="Single page" className={nav}><Icon size={14} box={14}><path d="M.5 1.500v11h13v-11M4 6.500h6" /></Icon></button>
        <button type="button" aria-label="Continuous" className={`${nav} h-6 bg-[#dedede]`}><Icon size={14} box={14}><path d="M.5 2v4.500h13V2M.5 13.500v-4h13v4M4 12.500h6" /></Icon></button>
        <button type="button" aria-label="Facing" className={nav}><Icon size={14} box={14}><path d="M.5 2v10.500h6V2M8 2v10.500h6V2M2.500 7h2M10 7h2" /></Icon></button>
        <button type="button" aria-label="Continuous facing" className={nav}><Icon size={14} box={14}><path d="M.5 2v4.500h6V2M8 2v4.500h6V2M.5 13.500v-4h6v4M8 13.500v-4h6v4" /></Icon></button>
        <button type="button" aria-label="Zoom out" className="w-3 leading-3">−</button>
        <input type="range" aria-label="Zoom level" defaultValue="52" className="mx-px h-[11px] w-[112px] appearance-none bg-[linear-gradient(#999,#999)] bg-[length:100%_1px] bg-center bg-no-repeat [&::-webkit-slider-thumb]:size-[11px] [&::-webkit-slider-thumb]:appearance-none [&::-webkit-slider-thumb]:rounded-full [&::-webkit-slider-thumb]:border [&::-webkit-slider-thumb]:border-[#777] [&::-webkit-slider-thumb]:bg-[#f4f4f4]" />
        <button type="button" aria-label="Zoom in" className="w-[13px] leading-3">+</button>
        <label className="relative">
          <select aria-label="Zoom" className="h-[20px] w-[79px] appearance-none border border-[#e2e2e2] bg-white pl-1 text-black"><option>118.01%</option></select>
          <Caret className="pointer-events-none absolute top-[8px] right-[4px] text-black" />
        </label>
        <button type="button" aria-label="Full screen" className="flex w-8 justify-center"><Icon size={14} box={14}><path d="M1 5V1h4M13 5V1H9M1 9v4h4M5 9l-4 4M13 9v4H9M9 9l4 4" /></Icon></button>
        <Icon size={16} box={16} className="self-end text-[#777]"><path d="M2 16L16 2M7 16l9-9M12 16l4-4" /></Icon>
      </div>
    </footer>
  );
}

function Reader() {
  return (
    <section className="relative flex min-w-0 flex-[1155_1_0%] flex-col overflow-hidden border-b-2 border-[#2b2b2e] bg-[#f3f3f3]">
      <TitleBar />
      <MenuBar />
      <Ribbon />
      <TabBar />
      <div className="flex min-h-0 flex-1">
        <aside className="flex w-[39px] shrink-0 flex-col items-center gap-[25px] border-r border-[#e2e2e2] bg-[linear-gradient(90deg,#e2e2e2,#f3f3f3_70%)] pt-[29px] pl-px text-[#444]">
          {SIDE_ICONS.map(([label, icon]) => (
            <button key={label} type="button" aria-label={label} className="flex h-5 items-center">{icon}</button>
          ))}
        </aside>
        <button type="button" aria-label="Expand panel" className="flex w-[13px] shrink-0 items-center justify-center border-r border-[#e2e2e2] text-[#999]"><svg width="5" height="9" viewBox="0 0 5 9" aria-hidden="true"><path d="M0 0l5 4.500L0 9z" fill="currentColor" /></svg></button>
        <div className="flex min-w-0 flex-1 flex-col">
          <div className="h-[4px] shrink-0 bg-[#a9a9a9]" />
          <Slide />
          <div className="h-[7px] shrink-0 border-y border-[#5a5a5a] bg-[#a9a9a9]" />
          <div className="mt-[4px] flex h-[14px] shrink-0 items-center bg-[#efefef]">
            <span className="h-full w-[9px] border border-b-0 border-[#666] bg-[#dedede]" />
            <span className="ml-[39px] h-[2px] flex-1 bg-[#8b8b8b]" />
          </div>
        </div>
        <div className="flex w-[17px] shrink-0 flex-col items-center bg-[#efefef]">
          <span className="h-[9px] w-full border-2 border-[#6a6a6a] bg-[#dedede]" />
          <div className="flex-1" />
          <span className="mb-[99px] h-[17px] w-[2px] bg-[#8b8b8b]" />
        </div>
      </div>
      <StatusBar />
      <SlideInk />
      <InkToolbar />
    </section>
  );
}

export default function App() {
  return (
    <div className="flex h-screen overflow-hidden bg-white">
      <Whiteboard />
      <Reader />
    </div>
  );
}
